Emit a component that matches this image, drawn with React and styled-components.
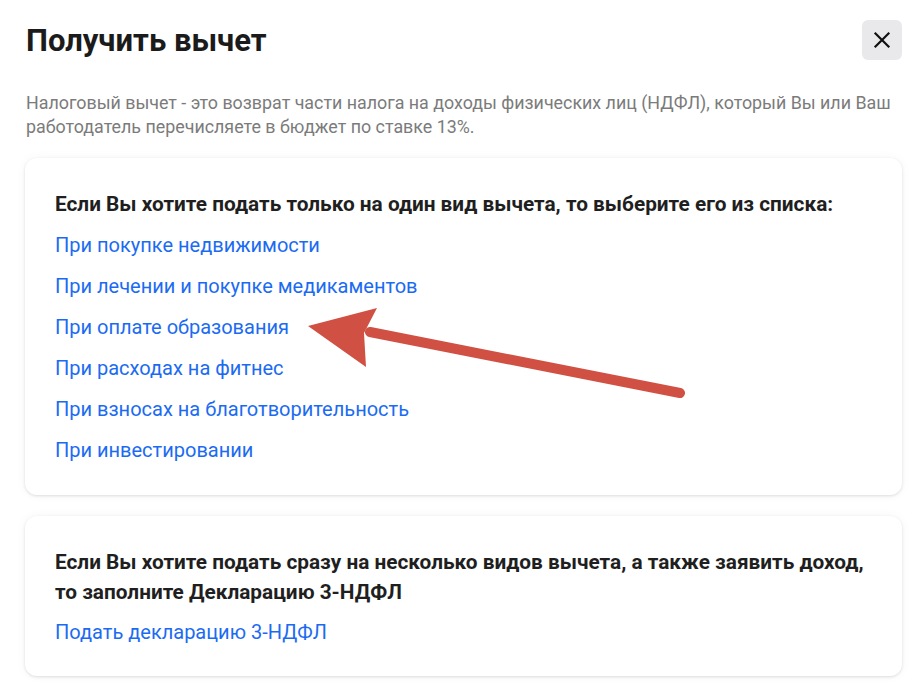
import React from 'react';
import styled, { createGlobalStyle } from 'styled-components';

const SINGLE = [
    'При покупке недвижимости',
    'При лечении и покупке медикаментов',
    'При оплате образования',
    'При расходах на фитнес',
    'При взносах на благотворительность',
    'При инвестировании',
];

const App = () => (
    <>
        <Global />
        <Modal>
            <Header>
                <Title>Получить вычет</Title>
                <CloseBtn aria-label="Закрыть">
                    <svg width="20" height="20" viewBox="0 0 20 20">
                        <path d="M3.5 3.5 L16.5 16.5 M16.5 3.5 L3.5 16.5" stroke="#111" strokeWidth="2.2" strokeLinecap="square" />
                    </svg>
                </CloseBtn>
            </Header>

            <Intro>
                Налоговый вычет - это возврат части налога на доходы физических лиц (НДФЛ), который Вы или Ваш
                работодатель перечисляете в бюджет по ставке 13%.
            </Intro>

            <Card $pad="31px 30px 30px">
                <CardTitle>Если Вы хотите подать только на один вид вычета, то выберите его из списка:</CardTitle>
                <LinkList $top={11}>
                    {SINGLE.map(item => (
                        <Link key={item} href="#">{item}</Link>
                    ))}
                </LinkList>
                <Pointer width="919" height="500" viewBox="0 0 919 500">
                    {/* coordinates relative to the card's top-left (25,158) */}
                    <line x1="655" y1="235" x2="345" y2="174" stroke="#d05143" strokeWidth="10" strokeLinecap="round" />
                    <path d="M283 168 L352 150 L339 175 L341 209 Z" fill="#d05143" />
                </Pointer>
            </Card>

            <Card $pad="31px 30px 29px">
                <CardTitle>
                    Если Вы хотите подать сразу на несколько видов вычета, а также заявить доход,
                    то заполните Декларацию 3-НДФЛ
                </CardTitle>
                <LinkList $top={10}>
                    <Link href="#">Подать декларацию 3-НДФЛ</Link>
                </LinkList>
            </Card>
        </Modal>
    </>
);

export default App;

/* ── Styles ──────────────────────────────────────────────────────────────── */

const Global = createGlobalStyle`
    body {
        margin: 0;
        background: #ffffff;
        font-family: Roboto, "Noto Sans", Arial, sans-serif;
        color: #1f1f1f;
    }
`;

const Modal = styled.div`
    width: 877px;
    padding: 20px 0 20px 25px;
    display: flex;
    flex-direction: column;
`;

const Header = styled.div`
    display: flex;
    align-items: center;
    justify-content: space-between;
    height: 40px;
`;

const Title = styled.h1`
    margin: 0 0 0 1px;
    font-size: 31px;
    font-weight: 700;
    color: #1b1b1b;
`;

const CloseBtn = styled.button`
    width: 40px;
    height: 40px;
    border: none;
    border-radius: 6px;
    background: #e9e9eb;
    display: flex;
    align-items: center;
    justify-content: center;
    padding: 0;
    cursor: pointer;
`;

const Intro = styled.p`
    margin: 31px 0 19px 1px;
    font-size: 17.85px;
    line-height: 24px;
    color: #7b7b7b;
`;

const Card = styled.div`
    position: relative;
    background: #ffffff;
    border-radius: 12px;
    box-shadow: 0 1px 3px rgba(0, 0, 0, 0.12), 0 0 12px rgba(0, 0, 0, 0.04);
    padding: ${p => p.$pad};
    margin-bottom: 21px;
`;

const CardTitle = styled.div`
    font-size: 20.8px;
    font-weight: 700;
    line-height: 30px;
    color: #1f1f1f;
`;

const LinkList = styled.div`
    display: flex;
    flex-direction: column;
    gap: 11px;
    margin-top: ${p => p.$top}px;
`;

const Link = styled.a`
    font-size: 20px;
    line-height: 30px;
    color: #1b6bf2;
    text-decoration: none;
    align-self: flex-start;
`;

const Pointer = styled.svg`
    position: absolute;
    left: 0;
    top: 0;
    pointer-events: none;
    overflow: visible;
`;
